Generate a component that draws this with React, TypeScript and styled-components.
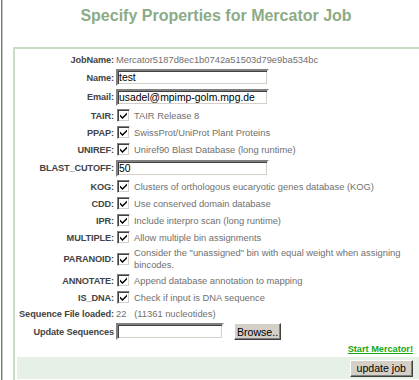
import React from 'react'
import styled, { createGlobalStyle } from 'styled-components'

const GlobalStyle = createGlobalStyle`
  html, body {
    margin: 0;
    padding: 0;
    background: #fff;
    overflow: hidden;
  }
  body {
    font-family: "Liberation Sans", Arial, sans-serif;
  }
`

const Frame = styled.div`
  box-sizing: border-box;
  width: 432px;
  height: 380px;
  margin-left: 1px;
  border-left: 1px solid #7c7c7c;
  box-shadow: inset 1px 0 0 #c4c4c4;
  padding: 0 0 0 11px;
`

const Title = styled.h2`
  margin: 0;
  padding: 7px 14px 0 0;
  height: 47px;
  box-sizing: border-box;
  text-align: center;
  font-size: 16px;
  font-weight: bold;
  color: #8cab86;
`

const Box = styled.div`
  border: 2px solid #c6dec2;
  padding: 3px 2px;
  height: 400px;
`

const Table = styled.div`
  display: grid;
  grid-template-columns: 97px 1fr;
  column-gap: 2px;
  align-items: center;
`

const Label = styled.div<{ $h?: number }>`
  height: ${(p) => p.$h ?? 17}px;
  display: flex;
  align-items: center;
  justify-content: flex-end;
  font-size: 9.2px;
  font-weight: bold;
  letter-spacing: -0.1px;
  color: #444;
  white-space: nowrap;
`

const Value = styled.div<{ $h?: number }>`
  height: ${(p) => p.$h ?? 17}px;
  display: flex;
  align-items: center;
  gap: 4px;
  font-size: 9.35px;
  color: #707070;
  white-space: nowrap;
`

const Wrap = styled.span`
  white-space: normal;
  line-height: 12px;
  width: 272px;
`

const TextInput = styled.input<{ $w?: number }>`
  box-sizing: border-box;
  width: ${(p) => p.$w ?? 153}px;
  height: 17px;
  margin: 0;
  padding: 0 1px;
  font-family: "Liberation Sans", Arial, sans-serif;
  font-size: 10.4px;
  color: #000;
  background: #fff;
  border: 2px solid;
  border-color: #808080 #fff #fff #808080;
  box-shadow: inset 1px 1px 0 #404040, inset -1px -1px 0 #d4d0c8;
  outline: none;
`

const Check = styled.span`
  box-sizing: border-box;
  flex: none;
  width: 13px;
  height: 13px;
  margin-left: 1px;
  background: #fff;
  border: 1px solid;
  border-color: #808080 #fff #fff #808080;
  box-shadow: inset 1px 1px 0 #404040, inset -1px -1px 0 #d4d0c8;
  display: flex;
  align-items: center;
  justify-content: center;
`

const Button = styled.button<{ $w?: number }>`
  box-sizing: border-box;
  width: ${(p) => (p.$w ? `${p.$w}px` : 'auto')};
  height: 17px;
  margin: 0;
  padding: 0 ${(p) => (p.$w ? 1 : 6)}px;
  font-family: "Liberation Sans", Arial, sans-serif;
  font-size: 10.6px;
  color: #000;
  background: #d4d0c8;
  border: 1px solid;
  border-color: #fff #404040 #404040 #fff;
  box-shadow: inset -1px -1px 0 #808080;
  white-space: nowrap;
`

const FileRow = styled(Value)`
  gap: 10px;
`

const LinkRow = styled.div`
  grid-column: 1 / -1;
  height: 16px;
  display: flex;
  align-items: flex-end;
  justify-content: flex-end;
  padding: 0 16px 3px 0;
  box-sizing: border-box;
`

const StartLink = styled.a`
  font-size: 9.2px;
  font-weight: bold;
  color: #16a816;
  text-decoration: underline;
`

const Footer = styled.div`
  grid-column: 1 / -1;
  height: 22px;
  background: #e6f0e6;
  display: flex;
  align-items: center;
  justify-content: flex-end;
  padding-right: 16px;
`

const Tick = () => (
  <svg width="7" height="7" viewBox="0 0 7 7">
    <path d="M0 2.5 L2.5 5 L7 0.5 L7 2.5 L2.5 7 L0 4.5 Z" fill="#000" />
  </svg>
)

const checks: [string, string][] = [
  ['TAIR:', 'TAIR Release 8'],
  ['PPAP:', 'SwissProt/UniProt Plant Proteins'],
  ['UNIREF:', 'Uniref90 Blast Database (long runtime)'],
]

const checks2: [string, string][] = [
  ['KOG:', 'Clusters of orthologous eucaryotic genes database (KOG)'],
  ['CDD:', 'Use conserved domain database'],
  ['IPR:', 'Include interpro scan (long runtime)'],
  ['MULTIPLE:', 'Allow multiple bin assignments'],
]

const CheckRow = ({ label, text, h }: { label: string; text: React.ReactNode; h?: number }) => (
  <>
    <Label $h={h}>{label}</Label>
    <Value $h={h}>
      <Check>
        <Tick />
      </Check>
      {text}
    </Value>
  </>
)

export default function App() {
  return (
    <Frame>
      <GlobalStyle />
      <Title>Specify Properties for Mercator Job</Title>
      <Box>
        <Table>
          <Label $h={16}>JobName:</Label>
          <Value $h={16}>Mercator5187d8ec1b0742a51503d79e9ba534bc</Value>

          <Label $h={19}>Name:</Label>
          <Value $h={19}>
            <TextInput defaultValue="test" />
          </Value>

          <Label $h={20}>Email:</Label>
          <Value $h={20}>
            <TextInput defaultValue="usadel@mpimp-golm.mpg.de" />
          </Value>

          {checks.map(([l, t]) => (
            <CheckRow key={l} label={l} text={t} />
          ))}

          <Label $h={20}>BLAST_CUTOFF:</Label>
          <Value $h={20}>
            <TextInput defaultValue="50" />
          </Value>

          {checks2.map(([l, t]) => (
            <CheckRow key={l} label={l} text={t} />
          ))}

          <CheckRow
            label="PARANOID:"
            h={26}
            text={<Wrap>Consider the "unassigned" bin with equal weight when assigning bincodes.</Wrap>}
          />
          <CheckRow label="ANNOTATE:" text="Append database annotation to mapping" />
          <CheckRow label="IS_DNA:" text="Check if input is DNA sequence" />

          <Label $h={16}>Sequence File loaded:</Label>
          <Value $h={16}>22&nbsp;&nbsp;&nbsp;(11361 nucleotides)</Value>

          <Label $h={19}>Update Sequences</Label>
          <FileRow $h={19}>
            <TextInput $w={108} />
            <Button $w={47}>Browse..</Button>
          </FileRow>

          <LinkRow>
            <StartLink href="#">Start Mercator!</StartLink>
          </LinkRow>
          <Footer>
            <Button>update job</Button>
          </Footer>
        </Table>
      </Box>
    </Frame>
  )
}
